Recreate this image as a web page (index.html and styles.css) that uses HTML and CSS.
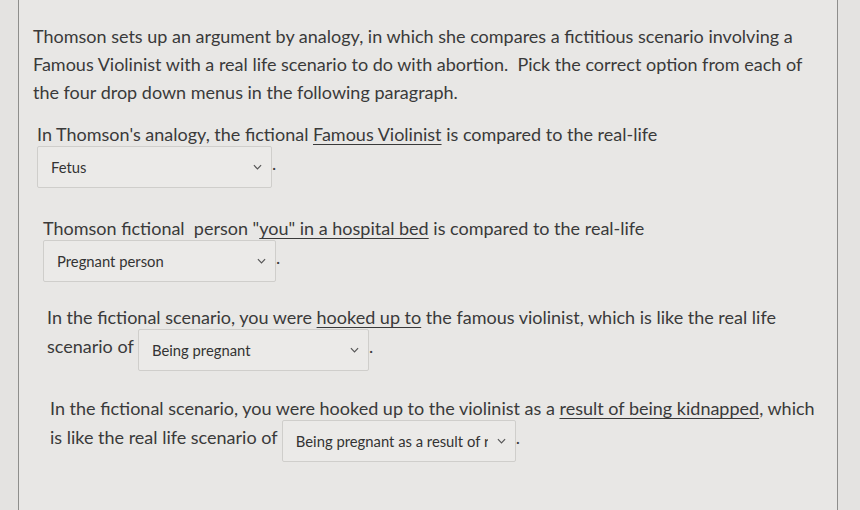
FILE: index.html
```html
<!DOCTYPE html>
<html>
<head>
<meta charset="utf-8">
<link rel="stylesheet" href="styles.css">
</head>
<body>
<div class="page">
  <div class="card">
    <p class="para intro">Thomson sets up an argument by analogy, in which she compares a fictitious scenario involving a Famous Violinist with a real life scenario to do with abortion.&nbsp; Pick the correct option from each of the four drop down menus in the following paragraph.</p>

    <p class="para q1">In Thomson's analogy, the fictional <u>Famous Violinist</u> is compared to the real-life <span class="select w1"><span class="val">Fetus</span><svg class="chev" viewBox="0 0 10 6" width="9" height="6"><path d="M1 1l4 4 4-4" fill="none" stroke="#555" stroke-width="1.3"/></svg></span>.</p>

    <p class="para q2">Thomson fictional&nbsp; person "<u>you" in a hospital bed</u> is compared to the real-life <span class="select w2"><span class="val">Pregnant person</span><svg class="chev" viewBox="0 0 10 6" width="9" height="6"><path d="M1 1l4 4 4-4" fill="none" stroke="#555" stroke-width="1.3"/></svg></span>.</p>

    <p class="para q3">In the fictional scenario, you were <u>hooked up to</u> the famous violinist, which is like the real life scenario of <span class="select w3"><span class="val">Being pregnant</span><svg class="chev" viewBox="0 0 10 6" width="9" height="6"><path d="M1 1l4 4 4-4" fill="none" stroke="#555" stroke-width="1.3"/></svg></span>.</p>

    <p class="para q4">In the fictional scenario, you were hooked up to the violinist as a <u>result of being kidnapped</u>, which is like the real life scenario of <span class="select w4"><span class="val">Being pregnant as a result of rape</span><svg class="chev" viewBox="0 0 10 6" width="9" height="6"><path d="M1 1l4 4 4-4" fill="none" stroke="#555" stroke-width="1.3"/></svg></span>.</p>
  </div>
</div>
</body>
</html>
```

FILE: styles.css
```css
html, body {
  margin: 0;
  padding: 0;
  background: #e4e3e1;
}
body {
  width: 860px;
  height: 510px;
  overflow: hidden;
  font-family: Lato, "Open Sans", sans-serif;
  color: #3a3a3a;
}
.page {
  height: 510px;
  padding-left: 18px;
}
.card {
  width: 820px;
  height: 510px;
  box-sizing: border-box;
  border-left: 1px solid #8e8e8c;
  border-right: 1px solid #8e8e8c;
  background: #e8e7e5;
  padding-top: 22px;
  padding-right: 14px;
}
.para {
  margin: 0;
  font-size: 18px;
  line-height: 28px;
}
.para u {
  text-decoration-thickness: 1px;
  text-underline-offset: 3px;
}
.intro { margin-left: 14px; margin-bottom: 14px; }
.q1 { margin-left: 18px; margin-bottom: 32px; }
.q2 { margin-left: 24px; margin-bottom: 27px; }
.q3 { margin-left: 28px; margin-bottom: 29px; }
.q4 { margin-left: 31px; }

.select {
  display: inline-flex;
  align-items: center;
  justify-content: space-between;
  box-sizing: border-box;
  height: 42px;
  margin: -2px 0 -6px;
  padding: 0 9px 0 13px;
  border: 1px solid #cfcecb;
  border-radius: 2px;
  background: #ebeae8;
  vertical-align: middle;
  font-size: 14.8px;
  color: #333;
}
.val {
  white-space: nowrap;
  overflow: hidden;
  flex: 1;
  min-width: 0;
}
.chev { flex: none; margin-left: 8px; }
.w1 { width: 235px; }
.w2 { width: 233px; }
.w3 { width: 231px; }
.w4 { width: 234px; }
.w4 .val { max-width: 192px; flex: none; }
```
